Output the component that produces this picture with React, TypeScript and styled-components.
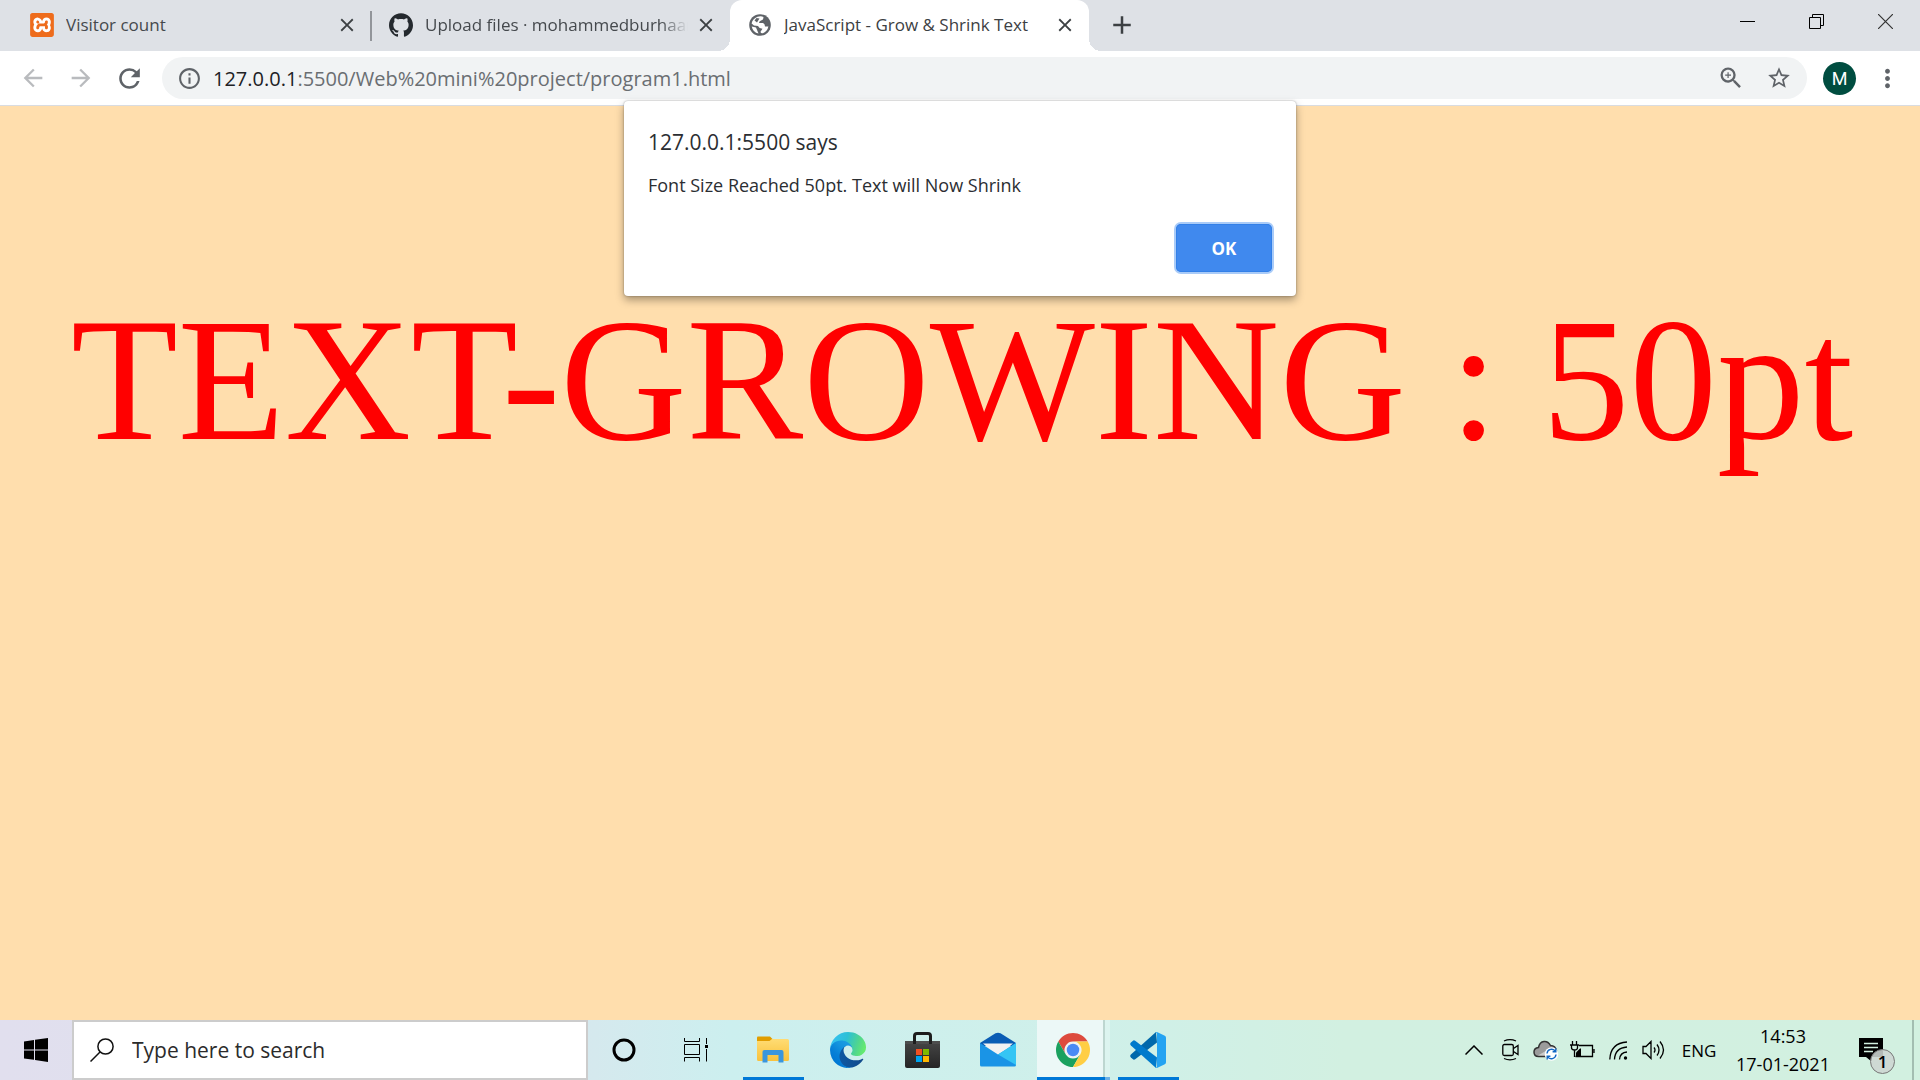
import React from 'react';
import styled, { createGlobalStyle } from 'styled-components';
import {
  MdAdd, MdArrowBack, MdArrowForward, MdClose, MdInfoOutline, MdMoreVert,
  MdRefresh, MdStarBorder, MdZoomIn,
} from 'react-icons/md';
import { SiGithub, SiXampp } from 'react-icons/si';

const uiFont = '"Open Sans", "Noto Sans", sans-serif';

const GlobalStyle = createGlobalStyle`
  *, *::before, *::after { box-sizing: border-box; }
  body { margin: 0; font-family: ${uiFont}; }
  button, input { font: inherit; color: inherit; border: 0; padding: 0; background: none; }
  svg { display: block; flex: none; }
`;

const Screen = styled.div`
  display: flex;
  flex-direction: column;
  min-height: 100vh;
`;

/* Tab strip */
const TabStrip = styled.header`
  display: flex;
  height: 51px;
  padding-left: 12px;
  background: #dee1e6;
`;

const Tab = styled.div<{ $active?: boolean; $divided?: boolean }>`
  position: relative;
  display: flex;
  align-items: center;
  flex: 0 1 359px;
  min-width: 0;
  gap: 12px;
  padding: 0 12px 2px 18px;
  border-radius: 12px 12px 0 0;
  background: ${(p) => (p.$active ? '#fff' : 'transparent')};
  color: ${(p) => (p.$active ? '#3c4043' : '#45494d')};

  &::after {
    content: '';
    display: ${(p) => (p.$divided ? 'block' : 'none')};
    position: absolute;
    right: -1px;
    top: 11px;
    width: 2px;
    height: 30px;
    background: #92959a;
  }
`;

const TabFoot = styled.span<{ $side: 'left' | 'right' }>`
  position: absolute;
  bottom: 0;
  ${(p) => p.$side}: -12px;
  width: 12px;
  height: 12px;
  background: radial-gradient(circle at ${(p) => p.$side} top, transparent 12px, #fff 12px);
`;

const TabIcon = styled.span`
  display: grid;
  place-items: center;
  flex: none;
  width: 24px;
  height: 24px;
`;

const TabTitle = styled.span<{ $fade?: boolean }>`
  flex: 1;
  min-width: 0;
  overflow: hidden;
  white-space: nowrap;
  font-size: 17px;
  line-height: 24px;
  ${(p) => p.$fade && 'margin-right: -6px; mask-image: linear-gradient(to right, #000 calc(100% - 28px), transparent);'}
`;

const IconButton = styled.button<{ $w: number; $color?: string }>`
  display: grid;
  place-items: center;
  flex: none;
  width: ${(p) => p.$w}px;
  height: 42px;
  color: ${(p) => p.$color ?? '#5f6368'};
`;

const NewTabButton = styled(IconButton)`
  align-self: center;
  margin: 0 0 2px 10px;
`;

const WindowControls = styled.div`
  display: flex;
  margin-left: auto;
`;

/* Toolbar */
const Toolbar = styled.nav`
  display: flex;
  align-items: center;
  height: 55px;
  padding: 0 9px;
  background: #fff;
  border-bottom: 1px solid #d9dce1;
`;

const Omnibox = styled.div`
  display: flex;
  align-items: center;
  flex: 1;
  height: 42px;
  margin: 0 9px;
  padding: 0 4px 0 8px;
  border-radius: 21px;
  background: #f1f3f4;
  font-size: 20px;
`;

const Origin = styled.label`
  padding-left: 5px;
  color: #202124;
`;

const AddressInput = styled.input`
  flex: 1;
  min-width: 0;
  color: #6a6e72;
  outline: none;
`;

const Avatar = styled.button`
  display: grid;
  place-items: center;
  width: 33px;
  height: 33px;
  margin: 0 7px;
  border-radius: 50%;
  background: #004d40;
  color: #fff;
  font-family: Roboto, sans-serif;
  font-size: 18px;
`;

/* Page */
const Page = styled.main`
  position: relative;
  flex: 1;
  padding: 174px 0 0 4px;
  background: #ffdead;
`;

const GrowingText = styled.p`
  margin: 0;
  color: #f00;
  font-family: "Liberation Serif", serif;
  font-size: 175px;
  line-height: 200px;
  text-align: center;
  white-space: nowrap;
`;

const Dialog = styled.section`
  position: absolute;
  top: -5px;
  left: 50%;
  transform: translateX(-50%);
  display: flex;
  flex-direction: column;
  width: 672px;
  padding: 24px;
  border-radius: 4px;
  background: #fff;
  box-shadow: 0 0 2px rgba(0, 0, 0, 0.35), 0 4px 8px rgba(0, 0, 0, 0.35);
  color: #2b2e32;
`;

const DialogTitle = styled.h1`
  margin: 2px 0 16px;
  font-size: 21px;
  line-height: 30px;
  font-weight: 400;
`;

const DialogMessage = styled.p`
  margin: 0 0 27px;
  font-size: 18px;
  line-height: 24px;
`;

const OkButton = styled.button`
  align-self: flex-end;
  width: 96px;
  height: 48px;
  border-radius: 5px;
  background: #4089ee;
  box-shadow: inset 0 0 0 1px #3380e8, 0 0 0 2px #a9cbf8;
  color: #fff;
  font-size: 17px;
  font-weight: 700;
`;

/* Taskbar */
const Taskbar = styled.footer`
  display: flex;
  height: 60px;
  background: linear-gradient(to right, #e1dfee 0%, #dfe0ee 12%, #d5e9ee 31%, #ccefef 38%, #cff0ea 56%, #d2f0e1 70%, #d2f0e0 100%);
  color: #000;
`;

const TaskButton = styled.button<{ $w: number }>`
  display: grid;
  place-items: center;
  flex: none;
  width: ${(p) => p.$w}px;
  height: 60px;
`;

const SearchBox = styled.label`
  display: flex;
  align-items: center;
  flex: 0 1 516px;
  min-width: 0;
  gap: 18px;
  padding-left: 16px;
  border: 2px solid #ccc;
  background: #fff;
`;

const SearchInput = styled.input`
  flex: 1;
  min-width: 0;
  font-size: 21px;
  outline: none;
  &::placeholder { color: #2b2b2b; opacity: 1; }
`;

const Apps = styled.div`
  display: flex;
  padding-left: 3px;
`;

const AppButton = styled(TaskButton)<{ $state?: 'open' | 'focused' }>`
  position: relative;
  ${(p) => p.$state === 'focused' && `
    background: linear-gradient(to right, transparent 2px, #ecf8f7 2px 68px, #bdd6d0 68px 70px, #dcf4ef 70px);
  `}
  &::after {
    content: '';
    display: ${(p) => (p.$state ? 'block' : 'none')};
    position: absolute;
    bottom: 0;
    left: ${(p) => (p.$state === 'focused' ? 2 : 8)}px;
    right: ${(p) => (p.$state === 'focused' ? 0 : 6)}px;
    height: 3px;
    background: ${(p) => (p.$state === 'focused' ? 'linear-gradient(to right, #0078d7 68px, #6cb0e6 68px)' : '#0078d7')};
  }
`;

const Tray = styled.div`
  display: flex;
  align-items: center;
  margin-left: auto;
`;

const Language = styled.button`
  width: 54px;
  height: 60px;
  font-size: 17px;
`;

const Clock = styled.time`
  width: 114px;
  font-size: 18px;
  line-height: 28px;
  text-align: center;
`;

const NoticeButton = styled(TaskButton)`
  position: relative;
  margin-right: 10px;
`;

const Badge = styled.span`
  position: absolute;
  left: 30px;
  top: 29px;
  width: 25px;
  height: 25px;
  border: 1px solid #777;
  border-radius: 50%;
  background: rgba(205, 213, 209, 0.88);
  font-size: 17px;
  font-weight: 600;
  line-height: 23px;
  text-align: center;
`;

const ShowDesktop = styled.button`
  width: 8px;
  height: 60px;
  border-left: 2px solid #a3bdb1;
`;

/* Drawings */
const XamppIcon = () => (
  <svg width="24" height="24" viewBox="0 0 24 24">
    <rect x="2" y="2" width="20" height="20" fill="#fff" />
    <SiXampp size={24} color="#ee6c1c" />
  </svg>
);

const GlobeIcon = () => (
  <svg width="22" height="22">
    <circle cx="11" cy="11" r="10.800" fill="#5f6368" />
    <path fill="#fff" d="M8.500 2.800Q12 1.800 14.500 3 14.500 6 12 6.500 10 7 10 9h4q2 .5 2 3.500h3.400Q18.500 17 14 19.200q-2.500.3-2.500-1.500l2-3Q10 14.500 9 12L5 11.500 2.600 9.500Q3.500 4.700 8.500 2.800z" />
    <path fill="#5f6368" d="M5.500 6.500l2-2.500 3 .5-2.500 4z" />
    <path fill="#fff" d="M2.700 12.500l4.300 1 2.500 6Q4 18.500 2.700 12.500z" />
  </svg>
);

const MinimizeIcon = () => (
  <svg width="15" height="15"><path d="M0 7.5h15" stroke="#000" /></svg>
);

const RestoreIcon = () => (
  <svg width="15" height="15" fill="none" stroke="#000">
    <path d="M.5 3.5h11v11H.5zM3.5 3.5v-3h11v11h-3" />
  </svg>
);

const CloseWindowIcon = () => (
  <svg width="15" height="15"><path d="M0 0l15 15M15 0L0 15" stroke="#333" strokeWidth="1.2" /></svg>
);

const WindowsIcon = () => (
  <svg width="24" height="24">
    <path d="M0 3.4L10 2v9.4H0zM11 1.8L24 0v11.4H11zM0 12.4h10v9.4L0 20.5zM11 12.4h13V24l-13-1.9z" />
  </svg>
);

const SearchIcon = () => (
  <svg width="24" height="24" fill="none" stroke="#111" strokeWidth="1.5">
    <circle cx="15.5" cy="8.5" r="7.6" /><path d="M10 14L.5 23.5" />
  </svg>
);

const CortanaIcon = () => (
  <svg width="24" height="24"><circle cx="12" cy="12" r="10" fill="none" stroke="#000" strokeWidth="3" /></svg>
);

const TaskViewIcon = () => (
  <svg width="25" height="24" fill="none" stroke="#000">
    <path d="M.5 0v3.5h15V0M.5 6.5h15v10H.5zM.5 23.500v-4h15v4M22.500 0v6M22.500 11v12.500" />
    <path d="M21 7h3v3h-3z" fill="#000" stroke="none" />
  </svg>
);

const ExplorerIcon = () => (
  <svg width="32" height="28">
    <defs>
      <linearGradient id="folder" x2="0" y2="1"><stop stopColor="#ffdc74" /><stop offset="1" stopColor="#f9c23c" /></linearGradient>
    </defs>
    <path d="M0 1.500Q0 .5 1 .5h12L15.500 3 13 8H0z" fill="#e19d00" />
    <path d="M0 5h12.500L15 3h15.500Q32 3 32 4.500v19q0 1.500-1.500 1.500h-29Q0 25 0 23.500z" fill="url(#folder)" />
    <path d="M5.500 26.500V16q0-2 2-2h17q2 0 2 2v10.500h-5V19h-11v7.500z" fill="#3a96dd" />
  </svg>
);

const EdgeIcon = () => (
  <svg width="36" height="36" viewBox="4.6 4.9 256 256">
    <defs>
      <linearGradient id="edgeA" x1="63" y1="177" x2="241" y2="177" gradientUnits="userSpaceOnUse"><stop stopColor="#0c59a4" /><stop offset="1" stopColor="#114a8b" /></linearGradient>
      <linearGradient id="edgeB" x1="157" y1="100" x2="46" y2="221" gradientUnits="userSpaceOnUse"><stop stopColor="#1b9de2" /><stop offset=".3" stopColor="#1595df" /><stop offset=".7" stopColor="#0680d7" /><stop offset="1" stopColor="#0078d4" /></linearGradient>
      <linearGradient id="edgeC" x1="20" y1="50" x2="250" y2="130" gradientUnits="userSpaceOnUse"><stop stopColor="#35c1f1" /><stop offset=".4" stopColor="#2cc0d5" /><stop offset=".75" stopColor="#4fd590" /><stop offset="1" stopColor="#66eb6e" /></linearGradient>
    </defs>
    <path fill="url(#edgeA)" d="M235.68 195.46a93.73 93.73 0 01-10.54 4.71 101.87 101.87 0 01-35.9 6.46c-47.32 0-88.54-32.55-88.54-74.32A31.48 31.48 0 01117.13 105c-42.8 1.8-53.8 46.4-53.8 72.53 0 73.88 68.09 81.37 82.76 81.37 7.91 0 19.84-2.3 27-4.56l1.31-.44a128.34 128.34 0 0066.6-52.8 4 4 0 00-5.32-5.64z" />
    <path fill="url(#edgeB)" d="M110.34 246.34A79.2 79.2 0 0187.6 225a80.72 80.72 0 0129.53-120c3.12-1.47 8.45-4.13 15.54-4a32.35 32.35 0 0125.69 13 31.88 31.88 0 016.36 18.66c0-.21 24.46-79.6-80-79.6-43.9 0-80 41.66-80 78.21a130.15 130.15 0 0012.11 56 128 128 0 00156.38 67.11 75.55 75.55 0 01-62.78-8z" />
    <path fill="url(#edgeC)" d="M156.94 153.78c-.81 1.05-3.3 2.5-3.3 5.66 0 2.61 1.7 5.12 4.72 7.23 14.38 10 41.49 8.68 41.56 8.68a59.56 59.56 0 0030.27-8.35 61.38 61.38 0 0030.43-52.88c.26-22.41-8-37.31-11.34-43.91C228.09 28.76 182.35 4.92 132.61 4.92a128 128 0 00-128 126.2c.48-36.54 36.8-66.05 80-66.05 3.5 0 23.46.34 42 10.07 16.34 8.58 24.9 18.94 30.85 29.21 6.18 10.67 7.28 24.15 7.28 29.52s-2.74 13.33-7.8 19.91z" />
  </svg>
);

const StoreIcon = () => (
  <svg width="36" height="36">
    <defs>
      <linearGradient id="bag" x2="0" y2="1"><stop stopColor="#464646" /><stop offset="1" stopColor="#252525" /></linearGradient>
    </defs>
    <path d="M9.500 11V4q0-2.500 2.500-2.500h11Q25.500 1.500 25.500 4v7" fill="none" stroke="#1d1d1d" strokeWidth="3" />
    <path d="M0 9h35v25q0 2-2 2H2q-2 0-2-2z" fill="url(#bag)" />
    <path d="M0 9h35v3H0z" fill="#4d4d4d" />
    <path d="M8 9h3v3H8zM24 9h3v3h-3z" fill="#1d1d1d" />
    <path d="M11 17h6v6h-6z" fill="#f25022" /><path d="M18 17h6v6h-6z" fill="#7fba00" />
    <path d="M11 24h6v6h-6z" fill="#00a4ef" /><path d="M18 24h6v6h-6z" fill="#ffb900" />
  </svg>
);

const MailIcon = () => (
  <svg width="36" height="36">
    <path d="M0 11L15.500 1.300q2.500-1.300 5 0L36 11v3H0z" fill="#0a5cb4" />
    <path d="M3 11.500h30L18 24z" fill="#f2f2f2" />
    <path d="M0 11l18 11.500L36 11v22q0 1.500-1.500 1.500h-33Q0 34.500 0 33z" fill="#1a94e6" />
    <path d="M18 22.500L36 11v22z" fill="#35c5f4" />
  </svg>
);

const ChromeIcon = () => (
  <svg width="34" height="34" viewBox="0 0 48 48">
    <path d="M24 12h20.780A24 24 0 0 0 3.220 12L13.600 30A12 12 0 0 1 24 12z" fill="#dd4b3e" />
    <path d="M13.600 30L3.220 12A24 24 0 0 0 24 48l10.400-18A12 12 0 0 1 13.600 30z" fill="#1aa15f" />
    <path d="M34.400 30L24 48a24 24 0 0 0 20.780-36H24a12 12 0 0 1 10.400 18z" fill="#ffce44" />
    <circle cx="24" cy="24" r="11.200" fill="#f1f1f1" /><circle cx="24" cy="24" r="8.800" fill="#4a8af5" />
  </svg>
);

const CodeIcon = () => (
  <svg width="36" height="36">
    <path d="M26 0L.9 22.600q-1.400 1.400 0 2.800l1.800 1.700q1.200 1 2.500.1L27 10.500z" fill="#0068ab" />
    <path d="M26 36L.9 13.400q-1.400-1.400 0-2.800l1.800-1.700q1.200-1 2.500-.1L27 25.500z" fill="#007acc" />
    <path d="M25.500.4Q26.300-.3 27.500.3l7.300 3.500Q36 4.400 36 5.700v24.600q0 1.300-1.200 1.900l-7.300 3.500q-1.200.6-2-.1 1.500.2 1.500-1.600V2Q27 .2 25.500.4z" fill="#24a3f2" />
  </svg>
);

const ChevronIcon = () => (
  <svg width="18" height="10" fill="none" stroke="#000" strokeWidth="1.500"><path d="M.5 9.500L9 1l8.500 8.500" /></svg>
);

const MeetIcon = () => (
  <svg width="17" height="24" fill="none" stroke="#000" strokeWidth="1.300">
    <path d="M2 3Q8 .2 14 3M2 20.500q6 2.600 12 0M11.500 10.500L16 7.500v9l-4.500-3" />
    <rect x=".8" y="6.500" width="10.500" height="11" rx="1.500" />
  </svg>
);

const CloudIcon = () => (
  <svg width="26" height="22" fill="none">
    <path d="M5.500 17.500Q1 17.500 1 13q0-4 4.500-4.500Q6.500 3 11 2.500q4-.5 6.500 4 5 0 6 5.500l-1 5.500z" fill="#9b9b9b" stroke="#333" strokeWidth="1.500" />
    <path d="M5 16.500L16 10l7 2-1 4.500z" fill="#ccc" />
    <circle cx="18.500" cy="15" r="6.800" fill="#fff" />
    <path d="M14 14.500a4.600 4.600 0 0 1 8.500-2M23 15.500a4.600 4.600 0 0 1-8.500 2M22.800 9.500v3.200h-3.200M14.200 20.500v-3.200h3.200" stroke="#1268c4" strokeWidth="1.400" />
  </svg>
);

const BatteryIcon = () => (
  <svg width="25" height="18" fill="none" stroke="#000" strokeWidth="1.300">
    <path d="M9 4.500h13.500v11H5.500M2.500 0v4M6.500 0v4M0 4h9M1.500 4v2.500Q1.500 9 4.500 9t3-2.500V4M4.500 9v7M24 8v4" />
    <path d="M6 15V11.500l4-4h1V15z" fill="#000" stroke="none" />
  </svg>
);

const WifiIcon = () => (
  <svg width="19" height="19" fill="none" stroke="#000" strokeWidth="1.300">
    <path d="M.8 18.500Q1.500 2 18 1M5.500 18.500Q6 7 18 6M10.500 18.500Q11 11.500 18 11" />
    <circle cx="16.500" cy="17" r="1.700" fill="#000" stroke="none" />
  </svg>
);

const SpeakerIcon = () => (
  <svg width="24" height="20" fill="none" stroke="#000" strokeWidth="1.300">
    <path d="M1 6.500h3L9 1.500v17l-5-5H1zM12 7.500q2 2.500 0 5M15 4.500q4 5.500 0 11M18 1.500q7 8.500 0 17" />
  </svg>
);

const NoticeIcon = () => (
  <svg width="24" height="24">
    <path d="M0 0h24v19H12.500v4.500L7 19H0z" />
    <path d="M5 5.500h14M5 9.500h14M5 13.500h9" stroke="#d2f0e0" strokeWidth="1.300" />
  </svg>
);

export default function App() {
  return (
    <Screen>
      <GlobalStyle />
      <TabStrip>
        <Tab $divided>
          <TabIcon><XamppIcon /></TabIcon>
          <TabTitle>Visitor count</TabTitle>
          <IconButton $w={24} $color="#3c4043" aria-label="Close tab"><MdClose size={22} /></IconButton>
        </Tab>
        <Tab>
          <TabIcon><SiGithub size={24} color="#24292e" /></TabIcon>
          <TabTitle $fade>Upload files · mohammedburhaan</TabTitle>
          <IconButton $w={24} $color="#3c4043" aria-label="Close tab"><MdClose size={22} /></IconButton>
        </Tab>
        <Tab $active>
          <TabFoot $side="left" />
          <TabIcon><GlobeIcon /></TabIcon>
          <TabTitle>JavaScript - Grow &amp; Shrink Text</TabTitle>
          <IconButton $w={24} $color="#3c4043" aria-label="Close tab"><MdClose size={22} /></IconButton>
          <TabFoot $side="right" />
        </Tab>
        <NewTabButton $w={46} $color="#3c4043" aria-label="New tab"><MdAdd size={30} /></NewTabButton>
        <WindowControls>
          <IconButton $w={69} aria-label="Minimize"><MinimizeIcon /></IconButton>
          <IconButton $w={69} aria-label="Restore"><RestoreIcon /></IconButton>
          <IconButton $w={69} aria-label="Close window"><CloseWindowIcon /></IconButton>
        </WindowControls>
      </TabStrip>
      <Toolbar>
        <IconButton $w={48} $color="#b9bbbe" aria-label="Back"><MdArrowBack size={28} /></IconButton>
        <IconButton $w={48} $color="#b9bbbe" aria-label="Forward"><MdArrowForward size={28} /></IconButton>
        <IconButton $w={48} aria-label="Reload"><MdRefresh size={31} /></IconButton>
        <Omnibox>
          <IconButton $w={38} aria-label="Site information"><MdInfoOutline size={25} /></IconButton>
          <Origin htmlFor="address">127.0.0.1</Origin>
          <AddressInput id="address" defaultValue=":5500/Web%20mini%20project/program1.html" />
          <IconButton $w={48} aria-label="Zoom"><MdZoomIn size={28} /></IconButton>
          <IconButton $w={48} aria-label="Bookmark"><MdStarBorder size={26} /></IconButton>
        </Omnibox>
        <Avatar>M</Avatar>
        <IconButton $w={48} aria-label="Menu"><MdMoreVert size={29} /></IconButton>
      </Toolbar>
      <Page>
        <GrowingText>TEXT-GROWING : 50pt</GrowingText>
        <Dialog role="alertdialog" aria-labelledby="alert-title" aria-describedby="alert-message">
          <DialogTitle id="alert-title">127.0.0.1:5500 says</DialogTitle>
          <DialogMessage id="alert-message">Font Size Reached 50pt. Text will Now Shrink</DialogMessage>
          <OkButton>OK</OkButton>
        </Dialog>
      </Page>
      <Taskbar>
        <TaskButton $w={72} aria-label="Start"><WindowsIcon /></TaskButton>
        <SearchBox>
          <SearchIcon />
          <SearchInput aria-label="Search" placeholder="Type here to search" />
        </SearchBox>
        <TaskButton $w={72} aria-label="Cortana"><CortanaIcon /></TaskButton>
        <TaskButton $w={72} aria-label="Task view"><TaskViewIcon /></TaskButton>
        <Apps>
          <AppButton $w={75} $state="open" aria-label="File Explorer"><ExplorerIcon /></AppButton>
          <AppButton $w={75} aria-label="Edge"><EdgeIcon /></AppButton>
          <AppButton $w={75} aria-label="Store"><StoreIcon /></AppButton>
          <AppButton $w={75} aria-label="Mail"><MailIcon /></AppButton>
          <AppButton $w={75} $state="focused" aria-label="Chrome"><ChromeIcon /></AppButton>
          <AppButton $w={75} $state="open" aria-label="Visual Studio Code"><CodeIcon /></AppButton>
        </Apps>
        <Tray>
          <TaskButton $w={36} aria-label="Show hidden icons"><ChevronIcon /></TaskButton>
          <TaskButton $w={36} aria-label="Meet Now"><MeetIcon /></TaskButton>
          <TaskButton $w={36} aria-label="OneDrive"><CloudIcon /></TaskButton>
          <TaskButton $w={36} aria-label="Battery"><BatteryIcon /></TaskButton>
          <TaskButton $w={36} aria-label="Network"><WifiIcon /></TaskButton>
          <TaskButton $w={36} aria-label="Volume"><SpeakerIcon /></TaskButton>
          <Language>ENG</Language>
          <Clock>14:53<br />17-01-2021</Clock>
          <NoticeButton $w={62} aria-label="Notifications"><NoticeIcon /><Badge>1</Badge></NoticeButton>
          <ShowDesktop aria-label="Show desktop" />
        </Tray>
      </Taskbar>
    </Screen>
  );
}
